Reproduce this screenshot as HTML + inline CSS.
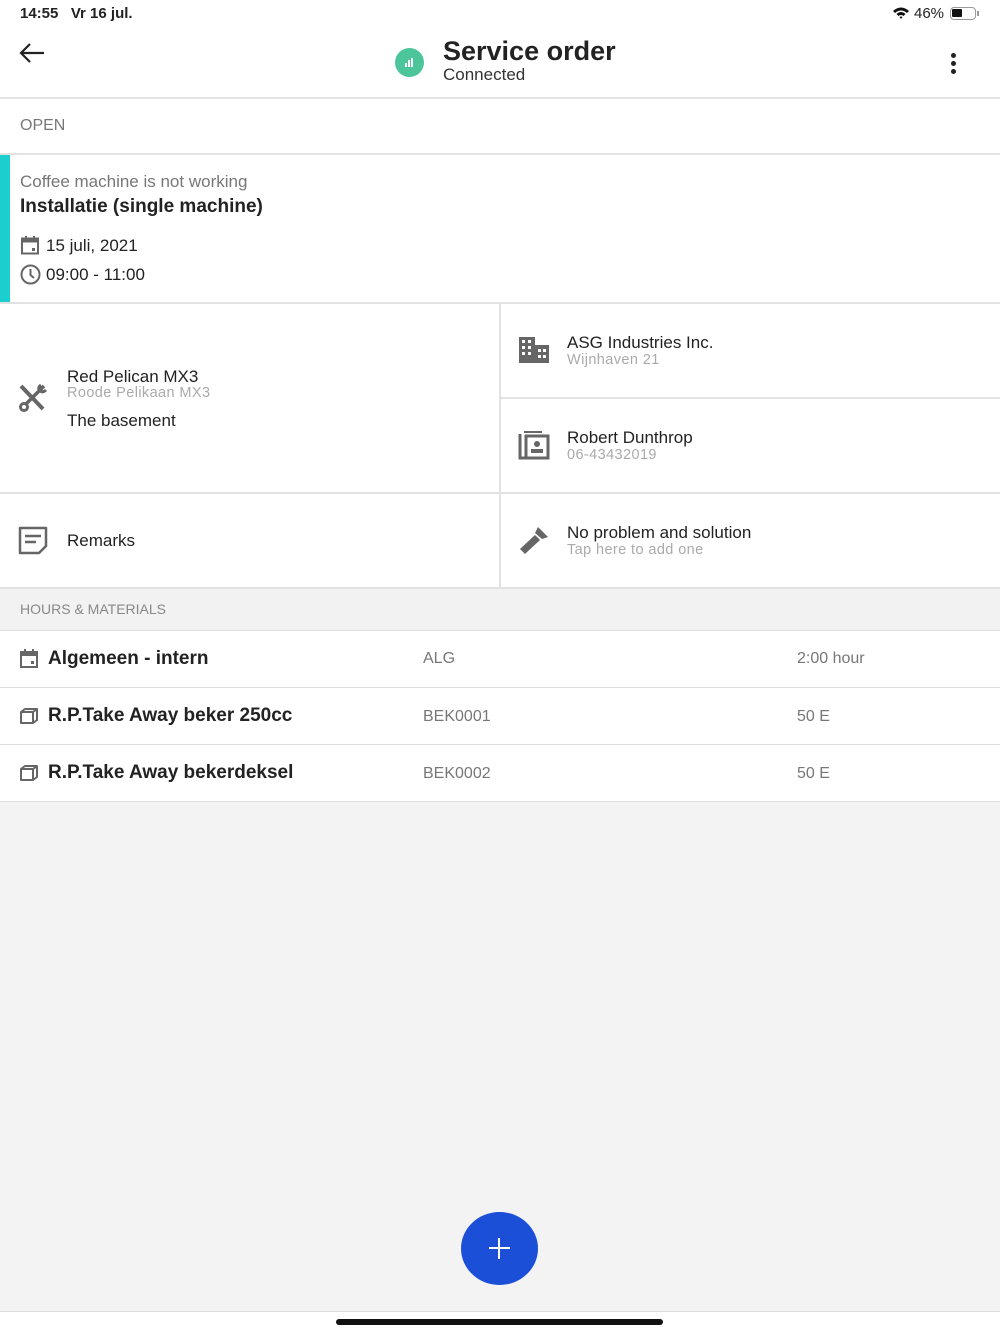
<!DOCTYPE html>
<html><head><meta charset="utf-8"><style>
*{margin:0;padding:0;box-sizing:border-box}
body{width:1000px;height:1334px;background:#f3f3f3;font-family:"Liberation Sans",sans-serif;color:#222;position:relative;overflow:hidden}
.abs{position:absolute}
.line{position:absolute;background:#e2e2e2}
.t{position:absolute;white-space:nowrap}
.sub{font-size:14.5px;color:#aaa;letter-spacing:0.4px}
</style></head><body>
<div class="abs" style="left:0;top:0;width:1000px;height:588px;background:#fff"></div>
<div class="t" style="left:20px;top:5px;font-size:15px;font-weight:bold">14:55&nbsp;&nbsp; Vr 16 jul.</div>
<svg class="abs" style="left:892px;top:6px" width="18" height="14" viewBox="0 0 18 14"><path d="M1 5 Q9 -2 17 5 L15 7 Q9 2 3 7Z M4.5 8 Q9 4 13.5 8 L11.5 10 Q9 8 6.5 10Z M7.5 11 L9 13 L10.5 11 Q9 10 7.5 11Z" fill="#111"/></svg>
<div class="t" style="left:914px;top:5px;font-size:15px">46%</div>
<div class="abs" style="left:950px;top:7px;width:26px;height:13px;border:1.5px solid #999;border-radius:4px"><div style="position:absolute;left:1px;top:1px;width:10px;height:8px;background:#111;border-radius:1px"></div></div>
<div class="abs" style="left:977px;top:11px;width:2px;height:5px;background:#999"></div>
<svg class="abs" style="left:18px;top:42px" width="28" height="22" viewBox="0 0 28 22"><path d="M26 11H3M12 2L3 11L12 20" stroke="#222" stroke-width="2.2" fill="none"/></svg>
<div class="abs" style="left:395px;top:48px;width:29px;height:29px;border-radius:50%;background:#4cc59a"></div>
<div class="abs" style="left:405px;top:63px;width:2px;height:4px;background:#fff"></div>
<div class="abs" style="left:408px;top:60px;width:2px;height:7px;background:#fff"></div>
<div class="abs" style="left:411px;top:58px;width:2px;height:9px;background:#fff"></div>
<div class="t" style="left:443px;top:36px;font-size:27px;font-weight:bold;color:#222">Service order</div>
<div class="t" style="left:443px;top:65px;font-size:17px;color:#333">Connected</div>
<div class="abs" style="left:951px;top:53px;width:5px;height:5px;border-radius:50%;background:#222;box-shadow:0 8px 0 #222,0 16px 0 #222"></div>
<div class="line" style="left:0;top:97px;width:1000px;height:2px"></div>
<div class="t" style="left:20px;top:117px;font-size:16px;color:#777">OPEN</div>
<div class="line" style="left:0;top:153px;width:1000px;height:2px"></div>
<div class="abs" style="left:0;top:155px;width:10px;height:147px;background:#1ccfcf"></div>
<div class="t" style="left:20px;top:172px;font-size:17px;color:#777">Coffee machine is not working</div>
<div class="t" style="left:20px;top:196px;font-size:19px;font-weight:bold;color:#222">Installatie (single machine)</div>
<svg class="abs" style="left:20px;top:235px" width="20" height="20" viewBox="0 0 20 20"><rect x="2" y="3.5" width="16" height="15" fill="none" stroke="#666" stroke-width="2"/><rect x="2" y="3.5" width="16" height="4" fill="#666"/><rect x="5" y="1" width="2" height="3" fill="#666"/><rect x="13" y="1" width="2" height="3" fill="#666"/><rect x="12" y="13" width="3" height="3" fill="#666"/></svg>
<div class="t" style="left:46px;top:236px;font-size:17px">15 juli, 2021</div>
<svg class="abs" style="left:20px;top:264px" width="21" height="21" viewBox="0 0 21 21"><circle cx="10.5" cy="10.5" r="9" fill="none" stroke="#666" stroke-width="2"/><path d="M10.5 5V11L14 14" stroke="#666" stroke-width="2" fill="none"/></svg>
<div class="t" style="left:46px;top:265px;font-size:17px">09:00 - 11:00</div>
<div class="line" style="left:0;top:302px;width:1000px;height:2px"></div>
<div class="line" style="left:499px;top:303px;width:2px;height:285px"></div>
<div class="line" style="left:500px;top:397px;width:500px;height:2px"></div>
<div class="line" style="left:0;top:492px;width:1000px;height:2px"></div>
<div class="line" style="left:0;top:587px;width:1000px;height:2px"></div>
<svg class="abs" style="left:17px;top:382px" width="32" height="32" viewBox="0 0 32 32"><path d="M4 4L26 27" stroke="#666" stroke-width="4"/><path d="M27 4L8 23" stroke="#666" stroke-width="3.5"/><circle cx="7" cy="25" r="3.5" fill="none" stroke="#666" stroke-width="3"/><path d="M24 3Q20 6 23 9Q26 11 29 8" stroke="#666" stroke-width="3" fill="none"/></svg>
<div class="t" style="left:67px;top:367px;font-size:17px">Red Pelican MX3</div>
<div class="t sub" style="left:67px;top:385px">Roode Pelikaan MX3</div>
<div class="t" style="left:67px;top:411px;font-size:17px">The basement</div>
<svg class="abs" style="left:518px;top:336px" width="32" height="28" viewBox="0 0 32 28"><rect x="1" y="1" width="16" height="26" fill="#666"/><rect x="17" y="9" width="14" height="18" fill="#666"/><g fill="#fff"><rect x="4" y="4" width="3" height="3"/><rect x="10" y="4" width="3" height="3"/><rect x="4" y="10" width="3" height="3"/><rect x="10" y="10" width="3" height="3"/><rect x="4" y="16" width="3" height="3"/><rect x="10" y="16" width="3" height="3"/><rect x="20" y="13" width="3" height="3"/><rect x="25" y="13" width="3" height="3"/><rect x="20" y="19" width="3" height="3"/><rect x="25" y="19" width="3" height="3"/></g></svg>
<div class="t" style="left:567px;top:333px;font-size:17px">ASG Industries Inc.</div>
<div class="t sub" style="left:567px;top:352px">Wijnhaven 21</div>
<svg class="abs" style="left:518px;top:430px" width="32" height="30" viewBox="0 0 32 30"><path d="M2 4V28H24" stroke="#666" stroke-width="3" fill="none"/><path d="M6 2H24" stroke="#666" stroke-width="2" fill="none"/><rect x="8" y="6" width="22" height="22" fill="none" stroke="#666" stroke-width="3"/><circle cx="19" cy="14" r="3" fill="#666"/><rect x="13" y="19" width="12" height="4" fill="#666"/></svg>
<div class="t" style="left:567px;top:428px;font-size:17px">Robert Dunthrop</div>
<div class="t sub" style="left:567px;top:447px">06-43432019</div>
<svg class="abs" style="left:17px;top:526px" width="32" height="29" viewBox="0 0 32 29"><path d="M3 2H29V20L22 27H3Z" fill="none" stroke="#666" stroke-width="2.5" stroke-linejoin="round"/><path d="M8 10H24M8 16H19" stroke="#666" stroke-width="2.5"/></svg>
<div class="t" style="left:67px;top:531px;font-size:17px">Remarks</div>
<svg class="abs" style="left:518px;top:524px" width="32" height="32" viewBox="0 0 32 32"><path d="M20 3L30 13L24 15L17 9Z" fill="#666"/><path d="M17 11L22 16L7 30L2 25Z" fill="#666"/></svg>
<div class="t" style="left:567px;top:523px;font-size:17px">No problem and solution</div>
<div class="t sub" style="left:567px;top:542px">Tap here to add one</div>
<div class="abs" style="left:0;top:589px;width:1000px;height:41px;background:#f2f2f2"></div>
<div class="t" style="left:20px;top:601px;font-size:14px;color:#888">HOURS &amp; MATERIALS</div>
<div class="line" style="left:0;top:630px;width:1000px;height:1px;background:#ddd"></div>
<div class="abs" style="left:0;top:631px;width:1000px;height:171px;background:#fff"></div>
<div class="line" style="left:0;top:687px;width:1000px;height:1px;background:#ddd"></div>
<div class="line" style="left:0;top:744px;width:1000px;height:1px;background:#ddd"></div>
<div class="line" style="left:0;top:801px;width:1000px;height:1px;background:#ddd"></div>
<svg class="abs" style="left:20px;top:649px" width="18" height="19" viewBox="0 0 18 19"><rect x="1" y="3" width="16" height="15" fill="none" stroke="#666" stroke-width="2"/><rect x="1" y="3" width="16" height="4" fill="#666"/><rect x="4" y="0" width="2" height="3" fill="#666"/><rect x="12" y="0" width="2" height="3" fill="#666"/><rect x="11" y="12" width="3" height="3" fill="#666"/></svg>
<div class="t" style="left:48px;top:648px;font-size:19px;font-weight:bold">Algemeen - intern</div>
<div class="t" style="left:423px;top:650px;font-size:16px;color:#777">ALG</div>
<div class="t" style="left:797px;top:650px;font-size:16px;color:#777">2:00 hour</div>
<svg class="abs" style="left:19px;top:708px" width="20" height="16" viewBox="0 0 20 16"><path d="M2 4H14V15H2Z M2 4L6 1H18L14 4 M18 1V12L14 15" fill="none" stroke="#666" stroke-width="2" stroke-linejoin="round"/></svg>
<div class="t" style="left:48px;top:705px;font-size:19px;font-weight:bold">R.P.Take Away beker 250cc</div>
<div class="t" style="left:423px;top:708px;font-size:16px;color:#777">BEK0001</div>
<div class="t" style="left:797px;top:708px;font-size:16px;color:#777">50 E</div>
<svg class="abs" style="left:19px;top:765px" width="20" height="16" viewBox="0 0 20 16"><path d="M2 4H14V15H2Z M2 4L6 1H18L14 4 M18 1V12L14 15" fill="none" stroke="#666" stroke-width="2" stroke-linejoin="round"/></svg>
<div class="t" style="left:48px;top:762px;font-size:19px;font-weight:bold">R.P.Take Away bekerdeksel</div>
<div class="t" style="left:423px;top:765px;font-size:16px;color:#777">BEK0002</div>
<div class="t" style="left:797px;top:765px;font-size:16px;color:#777">50 E</div>
<div class="abs" style="left:461px;top:1212px;width:77px;height:73px;border-radius:50%;background:#1b4fd8"></div>
<div class="abs" style="left:489px;top:1247px;width:21px;height:2px;background:#fff"></div>
<div class="abs" style="left:498px;top:1238px;width:2px;height:21px;background:#fff"></div>
<div class="line" style="left:0;top:1311px;width:1000px;height:1px;background:#ddd"></div>
<div class="abs" style="left:0;top:1312px;width:1000px;height:22px;background:#fff"></div>
<div class="abs" style="left:336px;top:1319px;width:327px;height:6px;border-radius:3px;background:#111"></div>
</body></html>
